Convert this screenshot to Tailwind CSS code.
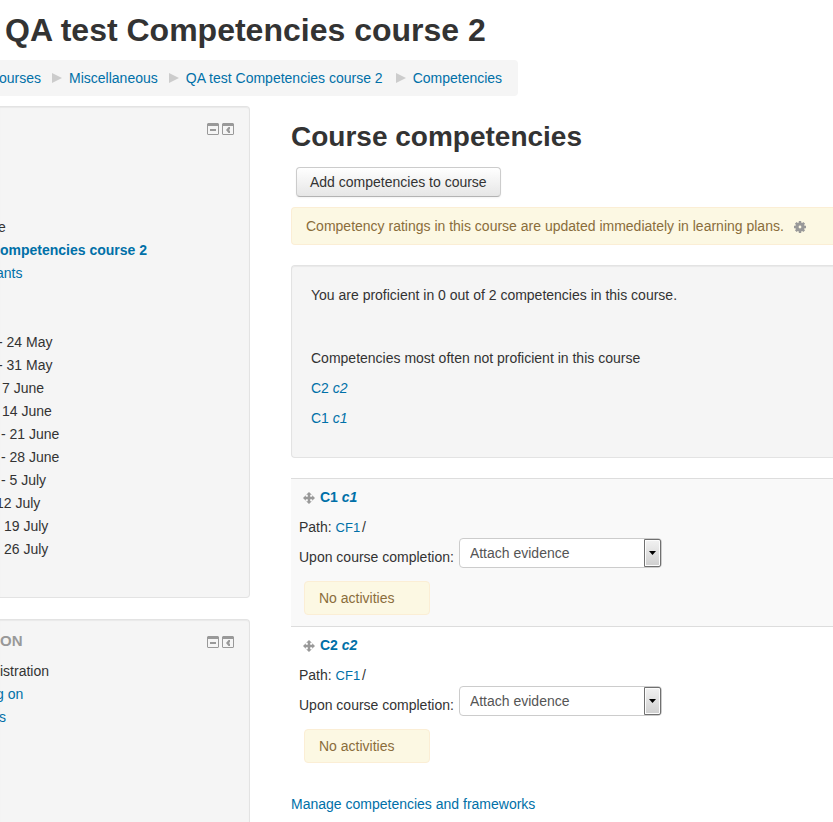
<!DOCTYPE html>
<html lang="en">
<head>
<meta charset="utf-8">
<meta name="viewport" content="width=device-width, initial-scale=1">
<title>QA test Competencies course 2</title>
<script src="https://cdn.jsdelivr.net/npm/@tailwindcss/browser@4"></script>
</head>
<body class="flex min-h-screen flex-col overflow-x-hidden bg-white font-['Liberation_Sans',Arial,sans-serif] text-[14px] leading-5 text-[#333]">
<svg class="hidden" aria-hidden="true">
  <symbol id="hide" viewBox="0 0 12 12"><path fill="#999" fill-rule="evenodd" d="M1 0h10l1 1v10l-1 1H1l-1-1V1zM1 3v8h10V3zM3 6h6v2H3z"/></symbol>
  <symbol id="dock" viewBox="0 0 12 12"><path fill="#999" fill-rule="evenodd" d="M1 0h10l1 1v10l-1 1H1l-1-1V1zM1 3v8h10V3zM6.500 4H8v2L7 7l1 1v2H6.500L4 7z"/></symbol>
  <symbol id="arrow" viewBox="0 0 10 10"><path fill="#ccc" d="M0 0L10 5L0 10z"/></symbol>
  <symbol id="move" viewBox="0 0 12 12"><path fill="#999" d="M6 0l2.800 2.800H7.200v2h2V3.200L12 6 9.200 8.800V7.200h-2v2h1.600L6 12 3.200 9.200h1.600v-2h-2v1.600L0 6l2.800-2.800v1.600h2v-2H3.200z"/></symbol>
</svg>

<header>
  <h1 class="pt-2.5 pl-[5px] text-[32px] leading-10 font-bold">QA test Competencies course 2</h1>
  <nav aria-label="Breadcrumb" class="mt-2.5 flex">
    <ol class="-ml-px flex items-center rounded-r bg-[#f5f5f5] py-2 pr-4 text-[#0070a8]">
      <li><a href="#">ourses</a></li>
      <li class="flex items-center"><svg class="mr-[7px] ml-[11px] size-2.5" aria-hidden="true"><use href="#arrow"/></svg><a href="#">Miscellaneous</a></li>
      <li class="flex items-center"><svg class="mr-[7px] ml-[11px] size-2.5" aria-hidden="true"><use href="#arrow"/></svg><a href="#">QA test Competencies course 2</a></li>
      <li class="flex items-center"><svg class="mr-[7px] ml-[13px] size-2.5" aria-hidden="true"><use href="#arrow"/></svg><a href="#">Competencies</a></li>
    </ol>
  </nav>
</header>

<div class="mt-2.5 flex flex-1">
  <aside class="flex w-[250px] shrink-0 flex-col gap-[21px]">
    <section class="overflow-hidden rounded-r border border-l-0 border-[#e3e3e3] bg-[#f5f5f5] pt-4 pb-9 shadow-[inset_0_1px_1px_rgba(0,0,0,0.05)]">
      <div class="flex justify-end gap-[3px] pr-[15px]">
        <button type="button" aria-label="Hide block"><svg class="block size-3"><use href="#hide"/></svg></button>
        <button type="button" aria-label="Dock block"><svg class="block size-3"><use href="#dock"/></svg></button>
      </div>
      <ul class="mt-[81px] leading-[23px] whitespace-nowrap">
        <li class="-ml-0.5">e</li>
        <li><a href="#" class="font-bold text-[#0070a8]">ompetencies course 2</a></li>
        <li class="-ml-1"><a href="#" class="text-[#0070a8]">ants</a></li>
        <li class="-ml-0.5 pt-[46px]">- 24 May</li>
        <li class="-ml-0.5">- 31 May</li>
        <li class="pl-0.5">7 June</li>
        <li class="pl-0.5">14 June</li>
        <li class="pl-px">- 21 June</li>
        <li class="pl-px">- 28 June</li>
        <li class="pl-px">- 5 July</li>
        <li class="-ml-1">12 July</li>
        <li class="pl-1">19 July</li>
        <li class="pl-1">26 July</li>
      </ul>
    </section>
    <section class="flex-1 overflow-hidden rounded-tr border border-b-0 border-l-0 border-[#e3e3e3] bg-[#f5f5f5] pt-[11px] shadow-[inset_0_1px_1px_rgba(0,0,0,0.05)]">
      <div class="flex items-end justify-between pr-[15px]">
        <h2 class="text-[15px] leading-5 font-bold text-[#999]">ON</h2>
        <div class="flex gap-[3px] pb-[3px]">
          <button type="button" aria-label="Hide block"><svg class="block size-3"><use href="#hide"/></svg></button>
          <button type="button" aria-label="Dock block"><svg class="block size-3"><use href="#dock"/></svg></button>
        </div>
      </div>
      <ul class="mt-[9px] leading-[23px] whitespace-nowrap">
        <li>istration</li>
        <li class="-ml-1"><a href="#" class="text-[#0070a8]">g on</a></li>
        <li class="-ml-px"><a href="#" class="text-[#0070a8]">s</a></li>
      </ul>
    </section>
  </aside>

  <main class="ml-[41px] min-w-0 flex-1 pt-[11px]">
    <h2 class="text-[28px] leading-10 font-bold">Course competencies</h2>
    <button type="button" class="mt-2.5 ml-[5px] block rounded border border-[#ccc] border-b-[#b3b3b3] bg-linear-to-b from-white to-[#e6e6e6] px-[13px] py-1 text-[#333] shadow-[inset_0_1px_0_rgba(255,255,255,0.2),0_1px_2px_rgba(0,0,0,0.05)]">Add competencies to course</button>
    <div class="mt-2.5 flex items-end rounded-l border border-r-0 border-[#fbeed5] bg-[#fcf8e3] py-2 pl-3.5 whitespace-nowrap text-[#8a6d3b]">
      <span>Competency ratings in this course are updated immediately in learning plans.</span>
      <a href="#" aria-label="Edit course competency settings" class="ml-2.5 pb-[3px]"><svg class="block size-3" viewBox="0 0 12 12"><path fill="#999" fill-rule="evenodd" d="M4.800 0h2.400v1.500l1 .4L9.300.9l1.800 1.800-1 1.100.4 1H12v2.400h-1.500l-.4 1 1 1.100-1.800 1.800-1.100-1-1 .4V12H4.800v-1.500l-1-.4-1.100 1L.9 9.300l1-1.100-.4-1H0V4.800h1.500l.4-1-1-1.100L2.700.9l1.100 1 1-.4zM6 4.600a1.400 1.400 0 1 0 0 2.800 1.400 1.400 0 0 0 0-2.800z"/></svg></a>
    </div>

    <section class="mt-5 rounded-l border border-r-0 border-[#e3e3e3] bg-[#f5f5f5] px-[19px] pt-[19px] pb-[29px] shadow-[inset_0_1px_1px_rgba(0,0,0,0.05)]">
      <p>You are proficient in 0 out of 2 competencies in this course.</p>
      <p class="mt-[43px]">Competencies most often not proficient in this course</p>
      <p class="mt-2.5"><a href="#" class="text-[#0070a8]">C2 <em>c2</em></a></p>
      <p class="mt-2.5"><a href="#" class="text-[#0070a8]">C1 <em>c1</em></a></p>
    </section>

    <ul class="mt-5">
      <li class="border-t border-[#ddd] bg-[#f9f9f9] px-2 pt-2 pb-[11px]">
        <div class="flex items-end gap-[5px] pl-1">
          <button type="button" aria-label="Move competency C1" class="cursor-move pb-[3px]"><svg class="block size-3"><use href="#move"/></svg></button>
          <a href="#" class="font-bold text-[#0070a8]">C1 <em>c1</em></a>
        </div>
        <p class="mt-2.5">Path: <a href="#" class="text-[13px] text-[#0070a8]">CF1</a> <span class="-ml-0.5">/</span></p>
        <div class="flex items-end gap-[5px]">
          <label for="outcome-c1" class="pb-px">Upon course completion:</label>
          <div class="relative">
            <select id="outcome-c1" class="block h-[30px] w-[203px] appearance-none rounded border border-[#ccc] bg-white pl-2.5 text-[#555]"><option>Attach evidence</option></select>
            <span class="pointer-events-none absolute inset-y-px right-px flex w-[17px] items-center justify-center rounded-r-xs border border-[#707070] bg-linear-to-b from-[#f2f2f2] to-[#cfcfcf] shadow-[inset_0_0_0_1px_#fcfcfc]"><svg class="h-1 w-[7px]" viewBox="0 0 7 4"><path d="M0 0h7L3.500 4z"/></svg></span>
          </div>
        </div>
        <p class="mt-[13px] ml-[5px] w-fit rounded border border-[#fbeed5] bg-[#fcf8e3] py-1.5 pr-[35px] pl-3.5 text-[#8a6d3b]">No activities</p>
      </li>
      <li class="border-t border-[#ddd] px-2 pt-2 pb-[11px]">
        <div class="flex items-end gap-[5px] pl-1">
          <button type="button" aria-label="Move competency C2" class="cursor-move pb-[3px]"><svg class="block size-3"><use href="#move"/></svg></button>
          <a href="#" class="font-bold text-[#0070a8]">C2 <em>c2</em></a>
        </div>
        <p class="mt-2.5">Path: <a href="#" class="text-[13px] text-[#0070a8]">CF1</a> <span class="-ml-0.5">/</span></p>
        <div class="flex items-end gap-[5px]">
          <label for="outcome-c2" class="pb-px">Upon course completion:</label>
          <div class="relative">
            <select id="outcome-c2" class="block h-[30px] w-[203px] appearance-none rounded border border-[#ccc] bg-white pl-2.5 text-[#555]"><option>Attach evidence</option></select>
            <span class="pointer-events-none absolute inset-y-px right-px flex w-[17px] items-center justify-center rounded-r-xs border border-[#707070] bg-linear-to-b from-[#f2f2f2] to-[#cfcfcf] shadow-[inset_0_0_0_1px_#fcfcfc]"><svg class="h-1 w-[7px]" viewBox="0 0 7 4"><path d="M0 0h7L3.500 4z"/></svg></span>
          </div>
        </div>
        <p class="mt-[13px] ml-[5px] w-fit rounded border border-[#fbeed5] bg-[#fcf8e3] py-1.5 pr-[35px] pl-3.5 text-[#8a6d3b]">No activities</p>
      </li>
    </ul>
    <p class="mt-5"><a href="#" class="text-[#0070a8]">Manage competencies and frameworks</a></p>
  </main>
</div>
</body>
</html>
